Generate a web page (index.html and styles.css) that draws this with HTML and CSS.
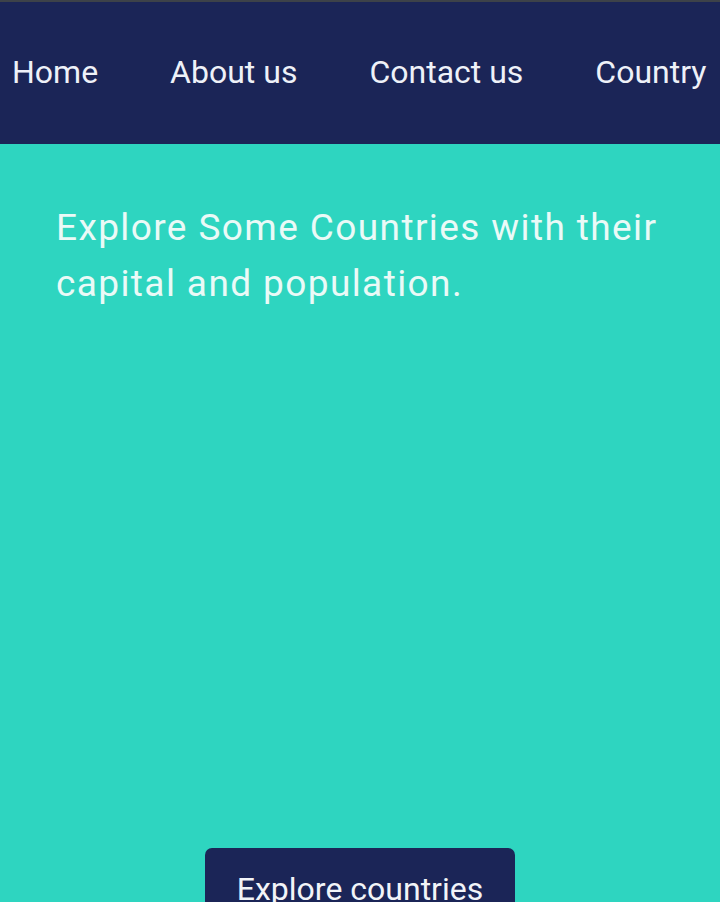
FILE: index.html
```html
<!DOCTYPE html>
<html lang="en">
<head>
<meta charset="utf-8">
<title>Countries</title>
<link rel="stylesheet" href="styles.css">
</head>
<body>
<div class="topline"></div>
<nav class="nav">
  <a class="nav-link" href="#">Home</a>
  <a class="nav-link" href="#">About us</a>
  <a class="nav-link" href="#">Contact us</a>
  <a class="nav-link" href="#">Country</a>
</nav>
<main class="hero">
  <h1 class="title">Explore Some Countries with their capital and population.</h1>
  <div class="actions">
    <button class="btn">Explore countries</button>
  </div>
</main>
</body>
</html>
```
FILE: styles.css
```css
html, body {
  margin: 0;
  padding: 0;
  height: 100%;
  overflow: hidden;
}
body {
  background: #2ed5c0;
  font-family: Roboto, "Noto Sans", sans-serif;
}
.topline {
  height: 2px;
  background: #3d4249;
}
.nav {
  height: 142px;
  background: #1b2557;
  display: flex;
  align-items: center;
  gap: 72px;
  padding-left: 12px;
  padding-bottom: 2px;
  box-sizing: border-box;
  white-space: nowrap;
  overflow: hidden;
}
.nav-link {
  color: #eef1f8;
  text-decoration: none;
  font-size: 32px;
  line-height: 1;
}
.hero {
  padding: 0 10px 0 56px;
}
.title {
  margin: 0;
  padding-top: 56px;
  font-weight: 400;
  font-size: 37px;
  letter-spacing: 1.4px;
  line-height: 56px;
  color: #eafaf7;
}
.actions {
  display: flex;
  justify-content: center;
  padding-top: 536px;
  margin-left: -56px;
  margin-right: -10px;
}
.btn {
  width: 310px;
  height: 80px;
  background: #1b2557;
  color: #f2f4f8;
  border: none;
  border-radius: 7px;
  font-family: Roboto, "Noto Sans", sans-serif;
  font-size: 32px;
  padding: 22px 0 0;
  display: flex;
  justify-content: center;
  align-items: flex-start;
}
```
